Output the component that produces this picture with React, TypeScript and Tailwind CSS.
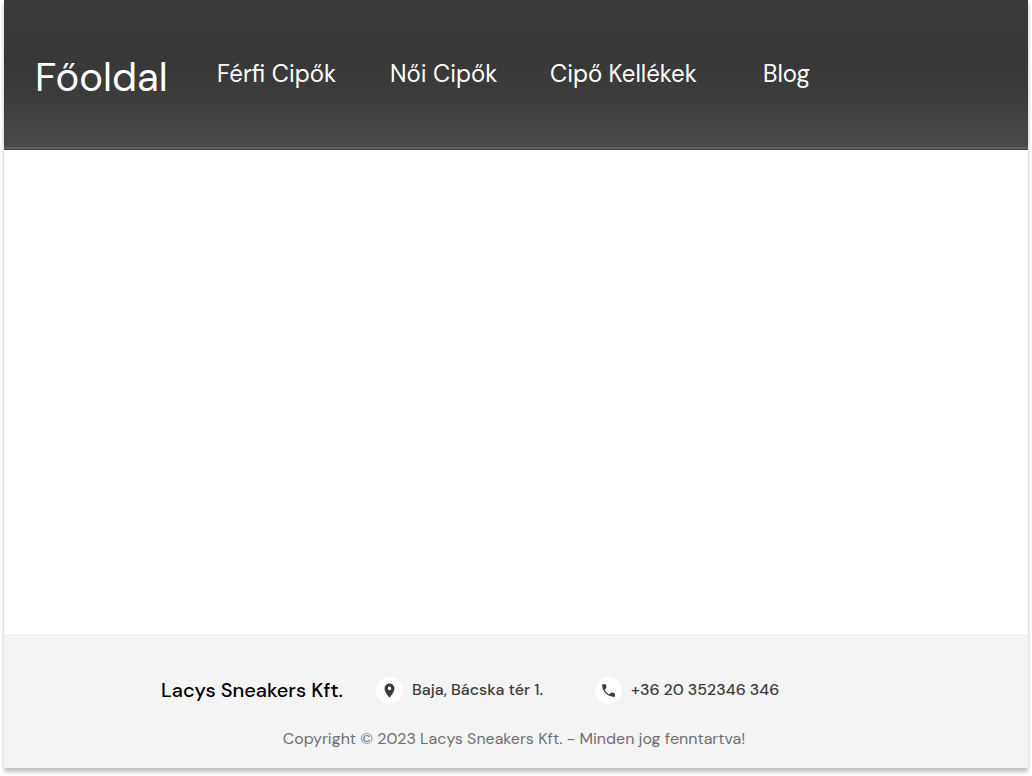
import { MdLocationOn, MdPhone } from "react-icons/md";

const links = ["Férfi Cipők", "Női Cipők", "Cipő Kellékek", "Blog"];

function Header() {
  return (
    <header className="border-b border-[#444444] bg-[linear-gradient(180deg,#3b3b3b_0%,#383838_40%,#3c3c3c_65%,#4a4a4a_100%)]">
      <nav
        aria-label="Főmenü"
        className="grid h-[149px] grid-cols-[182px_173px_160px_213px_auto] items-center border-b-2 border-[#626262] pl-[31px] text-2xl text-white"
      >
        <a href="#fooldal" className="pt-1.5 text-[40px] leading-12">
          Főoldal
        </a>
        {links.map((label) => (
          <a key={label} href="#menu" className="whitespace-nowrap">
            {label}
          </a>
        ))}
      </nav>
    </header>
  );
}

function Footer() {
  return (
    <footer className="bg-[#f4f4f4] pt-[42px] pr-5 pb-[17px] pl-4">
      <div className="flex items-center pl-[141px]">
        <p className="w-[215px] text-xl font-medium text-black">Lacys Sneakers Kft.</p>
        <address className="flex items-center not-italic text-base font-medium text-[#3c3c3c]">
          <span className="flex w-[219px] items-center gap-[9px]">
            <span className="flex size-[27px] items-center justify-center rounded-full bg-white">
              <MdLocationOn className="size-[17px]" aria-hidden="true" />
            </span>
            Baja, Bácska tér 1.
          </span>
          <a href="tel:+3620352346346" className="flex items-center gap-[9px]">
            <span className="flex size-[27px] items-center justify-center rounded-full bg-white">
              <MdPhone className="size-[17px]" aria-hidden="true" />
            </span>
            +36 20 352346 346
          </a>
        </address>
      </div>
      <p className="pt-[23px] text-center text-base text-[#6f6f6f]">
        Copyright © 2023 Lacys Sneakers Kft. - Minden jog fenntartva!
      </p>
    </footer>
  );
}

export default function App() {
  return (
    <div className="flex min-h-screen flex-col bg-white px-1 pb-2 font-['DM_Sans','Lato',sans-serif]">
      <div className="flex flex-1 flex-col bg-white shadow-[0_4px_4px_rgba(0,0,0,0.25)]">
        <Header />
        <main className="flex-1" />
        <Footer />
      </div>
    </div>
  );
}
